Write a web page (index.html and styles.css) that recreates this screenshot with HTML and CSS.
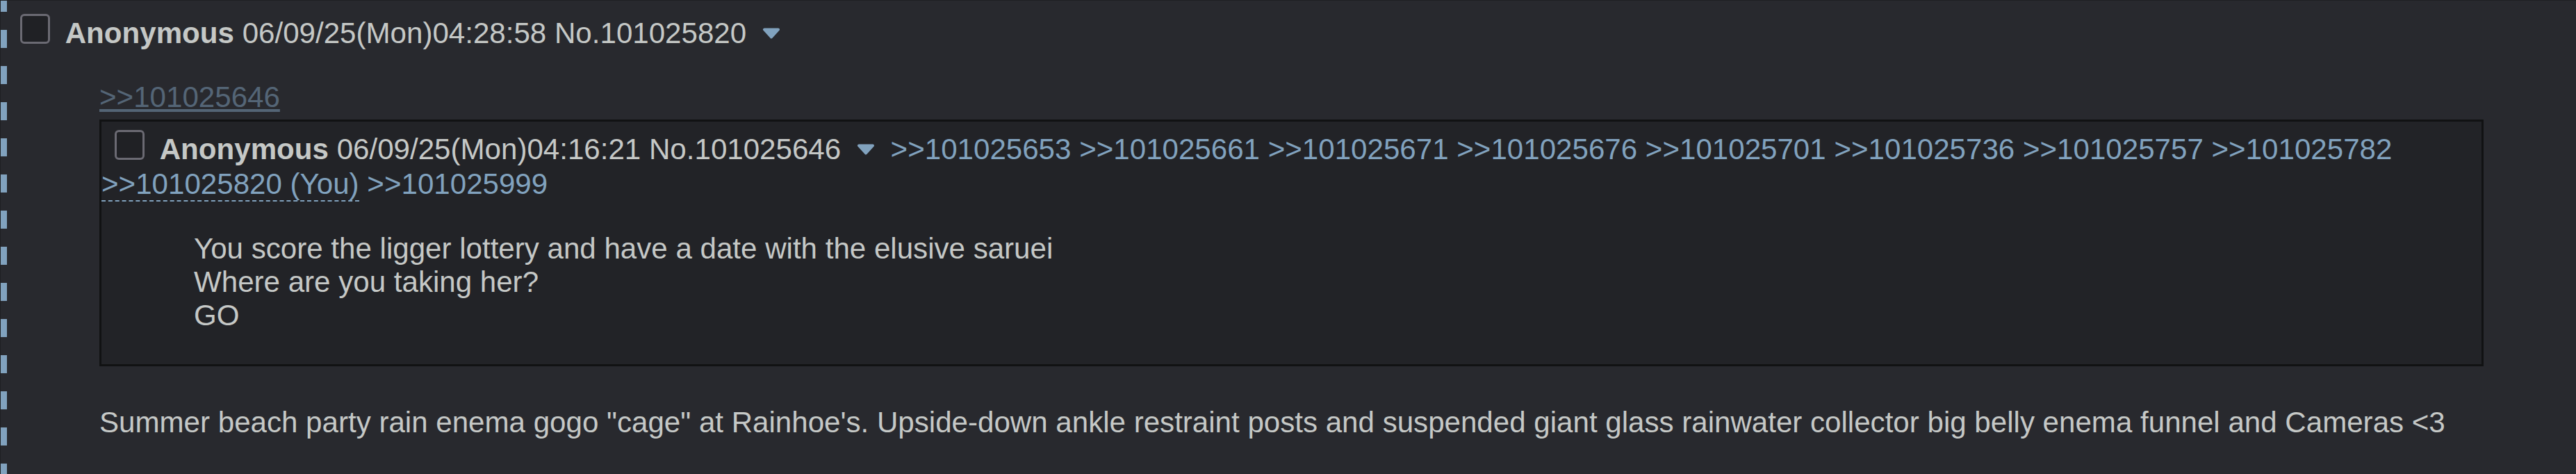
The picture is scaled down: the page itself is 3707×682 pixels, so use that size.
FILE: index.html
```html
<!DOCTYPE html>
<html lang="en">
<head>
    <meta charset="UTF-8">
    <meta name="viewport" content="width=device-width, initial-scale=1.0">
    <title>Thread</title>
    <link rel="stylesheet" href="styles.css">
</head>
<body>
    <div class="post quotes-you" id="p101025820">
        <div class="post-info">
            <input type="checkbox" class="post-select">
            <span class="name">Anonymous</span>
            <span class="date">06/09/25(Mon)04:28:58</span>
            <span class="post-num">No.101025820</span>
            <a class="menu-button" href="#"><svg width="26" height="16" viewBox="0 0 26 16"><path d="M3 2.5h20L13 13.5z" fill="#81a2be" stroke="#81a2be" stroke-width="4" stroke-linejoin="round"/></svg></a>
        </div>
        <blockquote class="post-message">
            <a class="quotelink inlined" href="#p101025646">&gt;&gt;101025646</a>
            <div class="inline" id="p101025646">
                <div class="post-info">
                    <input type="checkbox" class="post-select">
                    <span class="name">Anonymous</span>
                    <span class="date">06/09/25(Mon)04:16:21</span>
                    <span class="post-num">No.101025646</span>
                    <a class="menu-button" href="#"><svg width="26" height="16" viewBox="0 0 26 16"><path d="M3 2.5h20L13 13.5z" fill="#81a2be" stroke="#81a2be" stroke-width="4" stroke-linejoin="round"/></svg></a>
                    <a class="quotelink" href="#">&gt;&gt;101025653</a>
                    <a class="quotelink" href="#">&gt;&gt;101025661</a>
                    <a class="quotelink" href="#">&gt;&gt;101025671</a>
                    <a class="quotelink" href="#">&gt;&gt;101025676</a>
                    <a class="quotelink" href="#">&gt;&gt;101025701</a>
                    <a class="quotelink" href="#">&gt;&gt;101025736</a>
                    <a class="quotelink" href="#">&gt;&gt;101025757</a>
                    <a class="quotelink" href="#">&gt;&gt;101025782</a>
                    <a class="quotelink forwardlink" href="#p101025820">&gt;&gt;101025820 (You)</a>
                    <a class="quotelink" href="#">&gt;&gt;101025999</a>
                </div>
                <blockquote class="post-message">
                    You score the ligger lottery and have a date with the elusive saruei<br>
                    Where are you taking her?<br>
                    GO
                </blockquote>
            </div>
            Summer beach party rain enema gogo "cage" at Rainhoe's. Upside-down ankle restraint posts and suspended giant glass rainwater collector big belly enema funnel and Cameras &lt;3
        </blockquote>
    </div>
</body>
</html>
```

FILE: styles.css
```css
* {
    box-sizing: border-box;
}

body {
    margin: 0;
    background-color: #1f2023;
    color: #c5c8c6;
    font-family: "Liberation Sans", Arial, sans-serif;
    font-size: 42.1px;
}

/* outer reply, quoting you: long dashes down the left side */
.post {
    margin-left: 1px;
    padding: 19px 0 6px 9px;
    background: repeating-linear-gradient(to bottom, #81a2be 0 16px, transparent 16px 42px, #81a2be 42px 52px) no-repeat left top / 9px 100%, #28292e;
    border-top: 1px solid #1f2023;
    border-bottom: 1px solid #1f2023;
}

.post-select {
    appearance: none;
    width: 43px;
    height: 43px;
    margin: 0 10px 0 19px;
    border: 3px solid #6b6a73;
    border-radius: 6px;
    background-color: #202125;
    vertical-align: -1px;
}

.name {
    font-weight: bold;
}

.menu-button {
    display: inline-block;
    padding: 0 11px;
    vertical-align: 6px;
}

.menu-button svg {
    display: block;
}

.post-message {
    margin: 44px 133px;
}

.quotelink {
    color: #81a2be;
    text-decoration: none;
}

.quotelink.inlined {
    opacity: 0.5;
    text-decoration: underline;
}

.quotelink.forwardlink {
    border-bottom: 2px dashed #81a2be;
}

/* inlined quoted post */
.inline {
    margin: 8px 0 57px;
    padding: 12px 0 2px;
    background-color: #222327;
    border: 3px solid #111213;
}

.inline .post-info {
    line-height: 50px;
}
```
